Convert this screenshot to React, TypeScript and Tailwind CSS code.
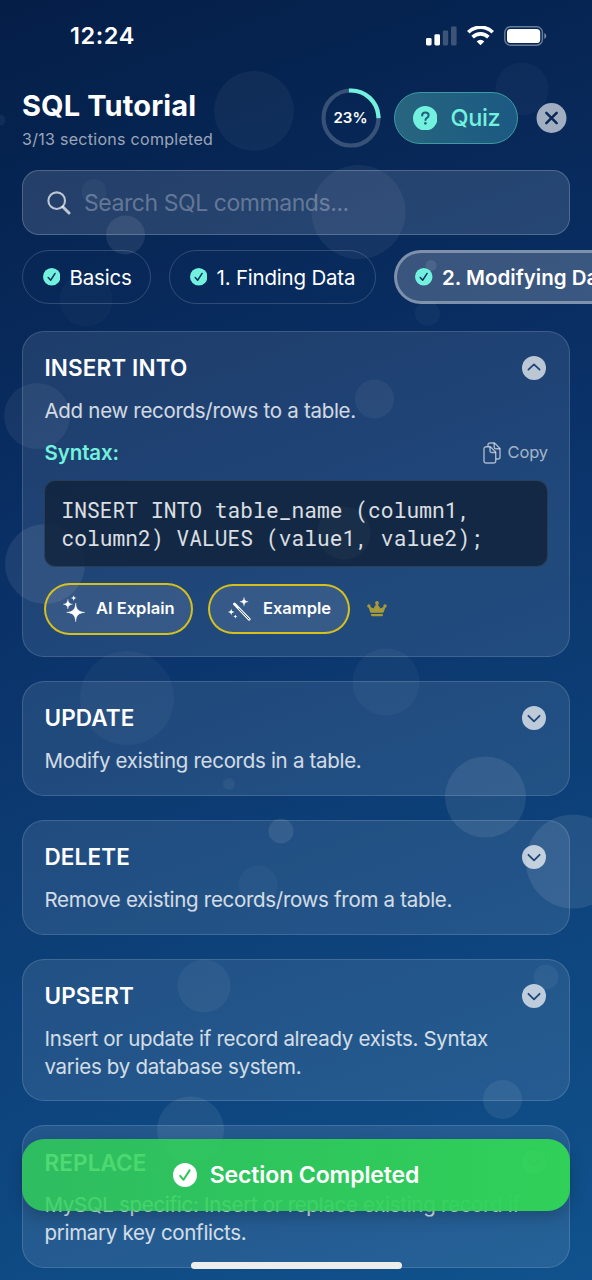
import React from 'react';
import { clsx } from 'clsx';

interface Command {
  name: string;
  description: string;
  syntax?: string;
}

const COMMANDS: Command[] = [
  {
    name: 'INSERT INTO',
    description: 'Add new records/rows to a table.',
    syntax: 'INSERT INTO table_name (column1, column2) VALUES (value1, value2);',
  },
  { name: 'UPDATE', description: 'Modify existing records in a table.' },
  { name: 'DELETE', description: 'Remove existing records/rows from a table.' },
  { name: 'UPSERT', description: 'Insert or update if record already exists. Syntax varies by database system.' },
  { name: 'REPLACE', description: 'MySQL specific: Insert or replace existing record if primary key conflicts.' },
];

// [cx, cy, r, opacity]
const BUBBLES: [number, number, number, number][] = [
  [254, 111, 40, 0.045],
  [522, 89, 26.5, 0.03],
  [0, 120, 5.5, 0.05],
  [94, 191.5, 12.5, 0.04],
  [125.5, 235, 19.5, 0.085],
  [358.5, 212, 47, 0.055],
  [86, 300, 26.5, 0.025],
  [431, 265.5, 5.5, 0.09],
  [427.5, 313.5, 12.5, 0.035],
  [37, 416, 33, 0.06],
  [374.5, 399, 19.5, 0.05],
  [45, 564, 40, 0.08],
  [344, 533, 26.5, 0.2],
  [386, 682, 33.5, 0.04],
  [127, 698, 47, 0.035],
  [229, 784, 6, 0.05],
  [485.5, 797, 40.5, 0.085],
  [281, 831, 12.5, 0.09],
  [258, 885, 19.5, 0.03],
  [573, 861.5, 47, 0.095],
  [204, 986, 26.5, 0.05],
  [546, 977, 12.5, 0.05],
  [502.5, 1099.5, 19.5, 0.075],
  [190.5, 1130, 33.5, 0.075],
];

const Bubbles = () => (
  <svg className="absolute inset-0" width="592" height="1280" viewBox="0 0 592 1280">
    {BUBBLES.map(([cx, cy, r, opacity], i) => (
      <circle key={i} cx={cx} cy={cy} r={r} fill="#fff" fillOpacity={opacity} />
    ))}
  </svg>
);

const CheckBadge = ({ className, tick }: { className?: string; tick: string }) => (
  <svg viewBox="0 0 24 24" className={clsx('shrink-0', className)}>
    <circle cx="12" cy="12" r="12" fill="currentColor" />
    <path d="M7.2 12.9l3.3 3.9 6.1-9.4" fill="none" stroke={tick} strokeWidth="2" strokeLinecap="round" strokeLinejoin="round" />
  </svg>
);

const ChevronBadge = ({ open }: { open?: boolean }) => (
  <svg viewBox="0 0 24 24" className="size-[24px] mr-[2px] shrink-0">
    <circle cx="12" cy="12" r="12" fill="#fff" fillOpacity=".7" />
    <path
      d={open ? 'M6.4 13.6L12 8.4l5.6 5.2' : 'M6.4 9.8l5.6 5.6 5.6-5.6'}
      fill="none"
      stroke="#1f4674"
      strokeWidth="1.8"
      strokeLinecap="round"
      strokeLinejoin="round"
    />
  </svg>
);

const StatusBar = () => (
  <div className="h-[70px] flex items-center justify-between pl-[70px] pr-[45px] pt-px">
    <span className="mt-px text-[23.5px] font-semibold tracking-[0.6px]">12:24</span>
    <div className="flex items-center gap-[10px]">
      <svg width="31" height="20" viewBox="0 0 31 20" fill="#fff">
        <rect x="0" y="12" width="5.6" height="7.5" rx="1.4" />
        <rect x="8.4" y="8.3" width="5.6" height="11.2" rx="1.4" />
        <rect x="16.8" y="4.4" width="5.4" height="15.1" rx="1.4" fillOpacity=".22" />
        <rect x="25" y="0.5" width="5.6" height="19" rx="1.4" fillOpacity=".22" />
      </svg>
      <svg width="27" height="20" viewBox="0 0 27 20" fill="none" stroke="#fff">
        <path d="M1.3 6.3a17.3 17.3 0 0 1 24.4 0" strokeWidth="3.6" />
        <path d="M5.6 11.1a11.2 11.2 0 0 1 15.8 0" strokeWidth="3.6" />
        <path d="M13.5 19.3l-3.8-3.9a5.4 5.4 0 0 1 7.6 0z" fill="#fff" stroke="none" />
      </svg>
      <svg width="43" height="20" viewBox="0 0 43 20">
        <rect x=".8" y=".8" width="37.6" height="18.4" rx="5.6" fill="none" stroke="#fff" strokeOpacity=".4" strokeWidth="1.4" />
        <rect x="3" y="3" width="33.2" height="14" rx="3.6" fill="#fff" />
        <path d="M40.3 6.9v6.2a3.4 3.4 0 0 0 0-6.2z" fill="#fff" fillOpacity=".45" />
      </svg>
    </div>
  </div>
);

const Header = () => (
  <header className="h-[96px] flex items-center pl-[22px] pr-[25px]">
    <div className="flex-1 pt-[5px]">
      <h1 className="text-[29px] leading-[36px] font-bold tracking-[0.12px]">SQL Tutorial</h1>
      <p className="text-[16px] leading-[20px] mt-[5px] mb-[4px] tracking-[0.29px] text-white/60">3/13 sections completed</p>
    </div>

    <div className="relative size-[60px] flex items-center justify-center">
      <svg className="absolute inset-0" viewBox="0 0 60 60" fill="none" strokeWidth="4.2">
        <circle cx="30" cy="30" r="27.5" stroke="#fff" strokeOpacity=".2" />
        <path d="M30 2.5A27.5 27.5 0 0 1 57.4 28" stroke="#72f1de" strokeLinecap="square" />
      </svg>
      <span className="pt-px text-[15px] font-semibold">23%</span>
    </div>

    <button className="ml-[13.5px] w-[124px] h-[52px] rounded-full border-[1.5px] border-[#3f9a9f] bg-linear-to-r from-[#27657f] to-[#1c5983] flex items-center pl-[17.5px] text-[#72f1de]">
      <svg viewBox="0 0 24 24" className="size-[24.5px] shrink-0">
        <circle cx="12" cy="12" r="12" fill="currentColor" />
        <path d="M8.9 9.4c.1-1.9 1.4-3 3.2-3 1.9 0 3.2 1.1 3.2 2.7 0 1.2-.6 1.9-1.6 2.5-1 .6-1.5 1.1-1.5 2.2" fill="none" stroke="#21617f" strokeWidth="2" strokeLinecap="round" />
        <circle cx="12.1" cy="17" r="1.3" fill="#21617f" />
      </svg>
      <span className="ml-[13.5px] text-[23.5px] font-[550] tracking-[-0.4px]">Quiz</span>
    </button>

    <button className="ml-[18px]">
      <svg viewBox="0 0 30 30" className="size-[31px]">
        <circle cx="15" cy="14.5" r="14.5" fill="#a1adc0" />
        <path d="M10 9.5l10 10M20 9.5l-10 10" stroke="#0a2856" strokeWidth="2.4" strokeLinecap="round" />
      </svg>
    </button>
  </header>
);

const SearchBar = () => (
  <div className="mx-[22px] mt-[4px] h-[65px] rounded-[17px] border border-white/20 bg-[#dbe8fa]/14 flex items-center pl-[24px]">
    <svg width="24" height="24" viewBox="0 0 24 24" fill="none" stroke="#fff" strokeOpacity=".7" strokeLinecap="round">
      <circle cx="9.7" cy="9.7" r="8.3" strokeWidth="2.1" />
      <path d="M16 16l6 6" strokeWidth="3" />
    </svg>
    <span className="ml-[13px] pt-[2px] text-[23px] tracking-[-0.44px] text-white/30">Search SQL commands...</span>
  </div>
);

const TABS = [
  { label: 'Basics', width: 'w-[129px]' },
  { label: '1. Finding Data', width: 'w-[207px]' },
  { label: '2. Modifying Data', width: 'w-[250px]', active: true },
];

const Tabs = () => (
  <nav className="mt-[15px] ml-[22px] flex gap-[18px] overflow-hidden">
    {TABS.map((tab) => (
      <button
        key={tab.label}
        className={clsx(
          'h-[54px] shrink-0 rounded-full flex items-center gap-[9.5px] whitespace-nowrap text-[20.5px]',
          tab.width,
          tab.active ? 'border-[3px] border-white/35 bg-white/20 font-semibold pl-[18px] tracking-[0.02px]' : 'border border-white/17 pl-[19.5px] tracking-[-0.2px]',
        )}
      >
        <CheckBadge className="size-[17.5px] text-[#72f1de]" tick="#0a3060" />
        <span className="pt-[2px]">{tab.label}</span>
      </button>
    ))}
  </nav>
);

const SparklesIcon = () => (
  <svg width="22" height="27" viewBox="0 0 22 27" fill="#fff">
    <path d="M12.7 8c.7 6.6 2.4 8.6 9.1 9.4-6.7.8-8.4 2.8-9.1 9.4-.7-6.6-2.4-8.6-9.1-9.4 6.7-.8 8.4-2.8 9.1-9.4z" stroke="#fff" strokeWidth=".4" />
    <path d="M4.9 4.3c.4 3.3 1.4 4.4 4.7 4.9-3.3.5-4.3 1.6-4.7 4.9C4.5 10.8 3.5 9.7.2 9.2c3.3-.5 4.3-1.6 4.7-4.9z" stroke="#fff" strokeWidth=".3" />
    <path d="M10.7.2c.3 1.9 1 2.6 3 2.9-2 .3-2.7 1-3 2.9-.3-1.9-1-2.6-3-2.9 2-.3 2.7-1 3-2.9z" />
  </svg>
);

const WandIcon = () => (
  <svg width="24" height="24" viewBox="0 0 24 24" fill="#fff">
    <path d="M17 .3c.4 3 1.2 3.9 4.2 4.4-3 .5-3.8 1.4-4.2 4.4-.4-3-1.2-3.9-4.2-4.4 3-.5 3.8-1.4 4.2-4.4z" stroke="#fff" strokeWidth=".3" />
    <path d="M4.2 11.6c.3 2.3 1 3 3.3 3.4-2.3.4-3 1.1-3.3 3.4-.3-2.3-1-3-3.3-3.4 2.3-.4 3-1.1 3.3-3.4z" />
    <path d="M8.4 17.3c.2 1.5.6 2 2.2 2.3-1.6.3-2 .8-2.2 2.3-.2-1.5-.6-2-2.2-2.3 1.6-.3 2-.8 2.2-2.3z" />
    <path d="M7.500 7.100l14.700 15.100" stroke="#fff" strokeWidth="2.8" strokeLinecap="round" />
    <path d="M12 11.700l10 10.300" stroke="#385980" strokeWidth="1" strokeLinecap="round" />
  </svg>
);

const CopyIcon = () => (
  <svg width="18" height="22" viewBox="0 0 18 22" fill="none" stroke="#fff" strokeOpacity=".6" strokeWidth="1.4" strokeLinejoin="round">
    <path d="M5 4.5V3a2 2 0 0 1 2-2h4.5L17 6.500V15a2 2 0 0 1-2 2h-2" />
    <path d="M11.2 1v4a1.7 1.7 0 0 0 1.7 1.7H17" />
    <path d="M3 4.8h4.3L12.7 10v9a2 2 0 0 1-2 2H3a2 2 0 0 1-2-2V6.800a2 2 0 0 1 2-2z" />
    <path d="M7 4.8v4A1.7 1.7 0 0 0 8.700 10.500h4" />
  </svg>
);

const CrownIcon = () => (
  <svg width="20" height="16" viewBox="0 0 20 16" fill="#a99b36">
    <path d="M3.7 11.2L2 5.8 6.6 8 9.8 3l3.6 5 4.6-2.2-1.8 5.4z" stroke="#a99b36" strokeLinejoin="round" />
    <path d="M3.9 12.9h12.2l-.3 1.4c-.1.7-.6 1-1.2 1H5.4c-.6 0-1.1-.3-1.2-1z" />
    <circle cx="10" cy="2" r="1.9" />
    <circle cx="1.9" cy="5" r="1.7" />
    <circle cx="18" cy="5" r="1.7" />
  </svg>
);

const CommandCard: React.FC<{ command: Command }> = ({ command }) => (
  <section className="rounded-[22px] border border-white/14 bg-[#cfe0f7]/11 pt-[21px] px-[21px] pb-[20px]">
    <div className="h-[30px] flex items-center justify-between">
      <h2 className="pl-[0.5px] text-[22.5px] font-semibold tracking-[0.12px]">{command.name}</h2>
      <ChevronBadge open={!!command.syntax} />
    </div>
    <p className="mt-[14px] ml-[0.5px] text-[20.5px] leading-[27.8px] tracking-[-0.3px] text-white/80">{command.description}</p>

    {command.syntax && (
      <>
        <div className="h-[28px] mt-[14px] flex items-center justify-between">
          <span className="pt-px pl-[0.5px] text-[20.5px] font-semibold tracking-[-0.1px] text-[#72f1de]">Syntax:</span>
          <button className="flex items-center gap-[7px] text-[16.5px] tracking-[-0.15px] text-white/60">
            <CopyIcon />
            Copy
          </button>
        </div>
        <pre className="mt-[13.5px] h-[87px] rounded-[11px] border border-white/10 bg-[#11233c]/85 pl-[16.5px] pr-[50px] pt-[14.5px] whitespace-pre-wrap font-['Roboto_Mono','DejaVu_Sans_Mono',monospace] text-[21.2px] leading-[28px] tracking-[0.06px] text-white/85">
          {command.syntax}
        </pre>
        <div className="mt-[15.5px] mb-[1.5px] -ml-[0.5px] flex items-center text-[16.5px] font-semibold">
          <button className="w-[149.5px] h-[52px] rounded-full border-2 border-[#f2d20c]/85 bg-white/10 flex items-center pl-[17.5px] gap-[11px] whitespace-nowrap">
            <SparklesIcon />
            AI Explain
          </button>
          <button className="ml-[15px] w-[142px] h-[50px] rounded-full border-2 border-[#f2d20c]/85 bg-white/10 flex items-center pl-[17px] gap-[12px] whitespace-nowrap">
            <WandIcon />
            Example
          </button>
          <span className="ml-[16.5px]">
            <CrownIcon />
          </span>
        </div>
      </>
    )}
  </section>
);

const Toast = () => (
  <div className="absolute left-[22px] top-[1138.5px] w-[548px] h-[72.5px] rounded-[22px] bg-linear-to-r from-[#30d158]/83 to-[#30d158]/99 shadow-[0_6px_16px_rgba(0,0,0,0.2)] flex items-center justify-center gap-[13px]">
    <CheckBadge className="size-[24px] text-white" tick="#2fc75a" />
    <span className="text-[23px] font-semibold tracking-[-0.1px]">Section Completed</span>
  </div>
);

export default function App() {
  return (
    <div className="relative w-[592px] h-[1280px] overflow-hidden bg-linear-[160deg,#041e47_0%,#0a3066_38%,#115590_105%] font-['Inter','Liberation_Sans',sans-serif] text-white">
      <Bubbles />
      <div className="relative">
        <StatusBar />
        <Header />
        <SearchBar />
        <Tabs />
        <main className="mt-[27px] mx-[22px] flex flex-col gap-[24px]">
          {COMMANDS.map((command) => (
            <CommandCard key={command.name} command={command} />
          ))}
        </main>
      </div>
      <Toast />
      <div className="absolute left-[190.5px] top-[1262px] w-[211.5px] h-[7px] rounded-full bg-[#ededed]" />
    </div>
  );
}
